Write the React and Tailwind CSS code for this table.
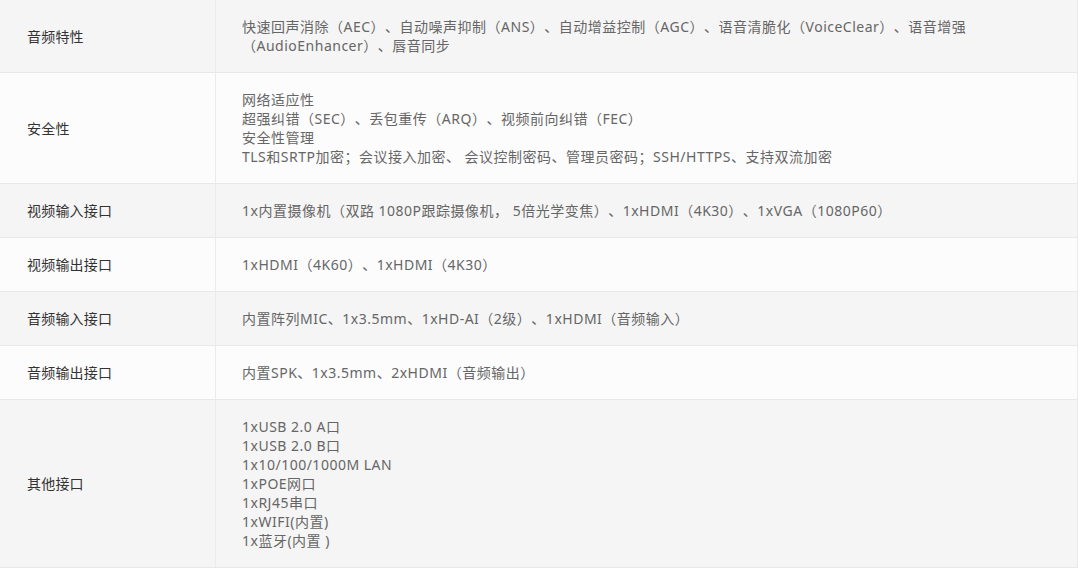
import React from "react";

const rows = [
  {
    label: "音频特性",
    gray: true,
    lines: [
      "快速回声消除（AEC）、自动噪声抑制（ANS）、自动增益控制（AGC）、语音清脆化（VoiceClear）、语音增强（AudioEnhancer）、唇音同步",
    ],
  },
  {
    label: "安全性",
    lines: [
      "网络适应性",
      "超强纠错（SEC）、丢包重传（ARQ）、视频前向纠错（FEC）",
      "安全性管理",
      "TLS和SRTP加密；会议接入加密、 会议控制密码、管理员密码；SSH/HTTPS、支持双流加密",
    ],
  },
  {
    label: "视频输入接口",
    gray: true,
    lines: ["1x内置摄像机（双路 1080P跟踪摄像机， 5倍光学变焦）、1xHDMI（4K30）、1xVGA（1080P60）"],
  },
  {
    label: "视频输出接口",
    lines: ["1xHDMI（4K60）、1xHDMI（4K30）"],
  },
  {
    label: "音频输入接口",
    gray: true,
    lines: ["内置阵列MIC、1x3.5mm、1xHD-AI（2级）、1xHDMI（音频输入）"],
  },
  {
    label: "音频输出接口",
    lines: ["内置SPK、1x3.5mm、2xHDMI（音频输出）"],
  },
  {
    label: "其他接口",
    gray: true,
    lines: [
      "1xUSB 2.0 A口",
      "1xUSB 2.0 B口",
      "1x10/100/1000M LAN",
      "1xPOE网口",
      "1xRJ45串口",
      "1xWIFI(内置)",
      "1x蓝牙(内置 )",
    ],
  },
];

const SpecRow = ({ label, lines, gray }) => {
  return (
    <div
      className={`flex border-b border-[#e8e8e8] ${gray ? "bg-[#f5f5f5]" : "bg-[#fcfcfc]"}`}
    >
      <div className="w-[216px] shrink-0 flex items-center pl-[27px] border-r border-[#ebebeb] text-[#333] tracking-[0.2px]">
        {label}
      </div>
      <div className="flex-1 pl-[26px] pr-[60px] py-[17px] text-[#666] tracking-[0.5px] [text-spacing-trim:space-all]">
        {lines.map((line, i) => (
          <div key={i}>{line}</div>
        ))}
      </div>
    </div>
  );
};

export default function App() {
  return (
    <div
      className="w-[1078px] bg-white border-r border-[#ebebeb] text-[14px] leading-[19px]"
      style={{ fontFamily: '"Noto Sans", "Noto Sans CJK SC", sans-serif' }}
    >
      {rows.map((row) => (
        <SpecRow key={row.label} {...row} />
      ))}
    </div>
  );
}
